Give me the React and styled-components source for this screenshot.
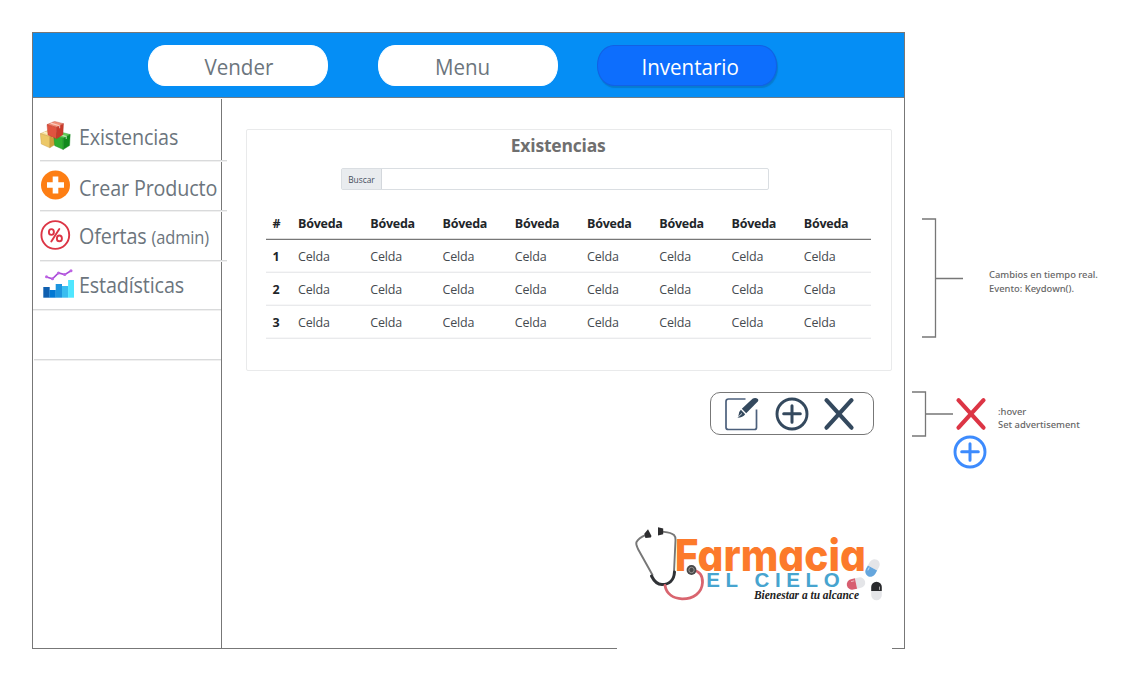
import React from "react";
import styled, { createGlobalStyle } from "styled-components";

const Global = createGlobalStyle`
  * { box-sizing: border-box; }
  body { margin: 0; background: #fff; font-family: "Open Sans", "Noto Sans", sans-serif; }
`;

const Page = styled.div`
  display: flex;
  width: 1142px;
  height: 698px;
  padding: 32px 0 0 32px;
  overflow: hidden;
`;

const Frame = styled.main`
  display: flex;
  flex-direction: column;
  width: 873px;
  height: 617px;
  border: 1px solid #777;
  border-bottom: 0;
`;

const TopBar = styled.nav`
  display: flex;
  flex: none;
  height: 65px;
  padding: 12px 0 0 115px;
  background: #058ef5;
  border-bottom: 1px solid #6f7d88;
`;

const NavButton = styled.button`
  width: 180px;
  height: 41px;
  margin: 0 ${(p) => p.$gap}px 0 0;
  padding: 1px ${(p) => Math.max(0, -p.$shift)}px 0 ${(p) => Math.max(0, p.$shift)}px;
  border: 1px solid ${(p) => (p.$active ? "#1261e4" : "#fff")};
  border-radius: 17px / 20px;
  background: ${(p) => (p.$active ? "#0d6efd" : "#fff")};
  color: ${(p) => (p.$active ? "#fff" : "#6c757d")};
  box-shadow: ${(p) => (p.$active ? "1px 2px 1px #077bd0" : "none")};
  font: 400 22px/30px "Open Sans", sans-serif;
`;

const NavText = styled.span`
  display: inline-block;
  transform: scaleX(0.935);
`;

const Body = styled.div`
  display: flex;
  flex: 1;
  min-height: 0;
`;

const Sidebar = styled.aside`
  width: 189px;
  margin-top: 1px;
  border-right: 1px solid #777;
`;

const SideItem = styled.div`
  display: flex;
  align-items: flex-start;
  width: ${(p) => p.$width}px;
  height: ${(p) => p.$height}px;
  margin-left: ${(p) => p.$left}px;
  border-bottom: 1px solid #d9dadb;
  box-shadow: 0 1px 0 #f0f0f0;
`;

const IconSlot = styled.span`
  flex: none;
  width: 32px;
  height: 32px;
  margin: ${(p) => p.$top}px 0 0 ${(p) => p.$left}px;
  svg { display: block; }
`;

const SideLabel = styled.span`
  margin: ${(p) => p.$top}px 0 0 ${(p) => p.$left}px;
  color: #6c757d;
  font-size: 21px;
  line-height: 28px;
  letter-spacing: -0.15px;
  white-space: nowrap;
  transform: scaleX(0.94);
  transform-origin: left;
  small { font-size: 17.5px; }
`;

const Content = styled.section`
  display: flex;
  flex-direction: column;
  flex: 1;
  padding: 31px 13px 0 24px;
`;

const Card = styled.div`
  width: 646px;
  height: 242px;
  padding: 4px 20px 0 19px;
  border: 1px solid #e9eaeb;
  border-radius: 2px;
`;

const Title = styled.h1`
  margin: 0;
  padding-right: 20px;
  color: #6f6f6f;
  font-size: 18.5px;
  font-weight: 700;
  line-height: 22px;
  text-align: center;
  letter-spacing: -0.2px;
  span { display: inline-block; transform: scaleX(0.945); }
`;

const SearchGroup = styled.label`
  display: flex;
  width: 428px;
  height: 22px;
  margin: 12px 0 0 75px;
  border: 1px solid #dadee2;
  border-radius: 2px;
`;

const SearchTag = styled.span`
  width: 40px;
  background: #e9ecef;
  border-right: 1px solid #d3d7dc;
  color: #454c5c;
  font-size: 8.4px;
  line-height: 21px;
  text-align: center;
`;

const SearchInput = styled.input`
  flex: 1;
  min-width: 0;
  border: 0;
  background: transparent;
  outline: none;
`;

const Table = styled.div`
  margin-top: 17px;
  width: 605px;
`;

const Row = styled.div`
  display: grid;
  grid-template-columns: 24px repeat(7, 72.25px) 1fr;
  height: 33px;
  border-bottom: ${(p) => (p.$head ? "1px solid #777" : "1px solid #e9eaec")};
  box-shadow: 0 ${(p) => (p.$head ? "-1px 0 #ddd inset" : "-1px 0 #f7f7f8 inset")};
`;

const Cell = styled.span`
  padding-left: ${(p) => (p.$index ? 6.5 : 8)}px;
  color: ${(p) => (p.$bold ? "#212529" : "#454a4f")};
  font-size: 12.5px;
  font-weight: ${(p) => (p.$bold ? 700 : 400)};
  line-height: 34px;
  letter-spacing: ${(p) => (p.$bold ? -0.25 : -0.2)}px;
`;

const Actions = styled.div`
  display: flex;
  align-self: flex-end;
  align-items: center;
  width: 164px;
  height: 43px;
  margin: 21px 18px 0 0;
  padding-left: 13px;
  border: 1px solid #777;
  border-radius: 10px;
  svg { flex: none; }
`;

const ActionButton = styled.span`
  display: flex;
  margin-right: ${(p) => p.$gap}px;
`;

const Brand = styled.div`
  margin: 87px 0 0 386px;
  svg { display: block; }
`;

const BottomEdge = styled.div`
  display: flex;
  justify-content: space-between;
  flex: none;
  &::before, &::after { content: ""; height: 1px; background: #777; }
  &::before { width: 584px; }
  &::after { width: 12px; }
`;

const Notes = styled.aside`
  display: flex;
  flex-direction: column;
  padding-top: 186px;
`;

const Note = styled.div`
  display: flex;
  align-items: flex-start;
  margin: ${(p) => p.$top}px 0 0 ${(p) => p.$left}px;
  svg { display: block; flex: none; }
`;

const NoteIcons = styled.div`
  display: flex;
  flex-direction: column;
  align-items: flex-end;
  gap: 4px;
  padding-top: 6px;
`;

const NoteText = styled.p`
  margin: ${(p) => p.$top}px 0 0 ${(p) => p.$left}px;
  color: #666;
  font: 500 9.4px/${(p) => p.$line}px "Noto Sans", "Open Sans", sans-serif;
  white-space: nowrap;
`;

const Cube = ({ x, y, top, left, right, line }) => (
  <g transform={`translate(${x} ${y})`} stroke={line} strokeWidth=".4" strokeLinejoin="round">
    <path d="M0 3.200 7.500 0l9 2.300L9.500 6Z" fill={top} />
    <path d="M0 3.200 9.500 6v11.300L1 13.500Z" fill={left} />
    <path d="m9.500 6 7-3.700-.6 11-6.400 4Z" fill={right} />
    <path d="m3.600 1.700 9 2.700v2.500" fill="none" stroke="#fff" strokeOpacity=".55" strokeWidth="1.200" />
  </g>
);

const BoxesIcon = () => (
  <svg width="32" height="30" viewBox="0 0 32 30">
    <Cube x={0.3} y={9.5} top="#f7e3a0" left="#ecc868" right="#cf9f3a" line="#c49a45" />
    <Cube x={13.7} y={11.2} top="#66ce58" left="#2fae30" right="#118a1c" line="#1c8a26" />
    <Cube x={7} y={0.4} top="#f28f76" left="#e0533f" right="#c8392a" line="#b8382c" />
  </svg>
);

const AddBadgeIcon = () => (
  <svg width="31" height="30" viewBox="0 0 31 30">
    <circle cx="15.500" cy="15" r="14.500" fill="#fd7e14" />
    <path d="M15.500 6.500v17M7 15h17" stroke="#fff" strokeWidth="5.600" />
  </svg>
);

const PercentIcon = () => (
  <svg width="31" height="30" viewBox="0 0 31 30" fill="none" stroke="#dc3545">
    <circle cx="15.300" cy="15" r="13.900" strokeWidth="1.900" />
    <ellipse cx="11.400" cy="12" rx="2.500" ry="2.900" strokeWidth="1.900" />
    <ellipse cx="19.400" cy="18.400" rx="2.500" ry="2.900" strokeWidth="1.900" />
    <path d="m19.300 9-8 12.500" strokeWidth="1.900" strokeLinecap="round" />
  </svg>
);

const StatsIcon = () => (
  <svg width="32" height="30" viewBox="0 0 32 30">
    <path fill="#0f5faf" d="M.3 18h6.400v10.700H.3z" />
    <path fill="#0078d4" d="M6.500 21h6.300v7.700H6.500z" />
    <path fill="#1c94de" d="M12.700 15H19v13.700h-6.300z" />
    <path fill="#38bdf0" d="M19 17h6.200v11.700H19z" />
    <path fill="#50e6ff" d="M25.100 11H31v17.700h-5.900z" />
    <path d="M3.500 8 9.500 9.800 15.500 4 21.700 5.600 28 1.700" fill="none" stroke="#a94bd8" strokeWidth="1.600" />
    <g fill="#bd63e3">
      <circle cx="3.500" cy="7.800" r="1.500" /><circle cx="9.500" cy="9.800" r="1.500" /><circle cx="15.500" cy="4" r="1.500" />
      <circle cx="21.700" cy="5.600" r="1.500" /><circle cx="28" cy="1.700" r="1.500" />
    </g>
  </svg>
);

const EditIcon = () => (
  <svg width="35" height="34" viewBox="0 0 35 34">
    <path d="M21.500 2H4.500Q2 2 2 4.500v26Q2 32.500 4.500 32.500h26q2 0 2-2V12.500" fill="none" stroke="#4c607c" strokeWidth="1.700" />
    <path d="M32.500 1.200q2.800.8 1.300 3.300L22.200 16.200l-4.400-4.400L28.500 1.800Q30 .8 32.500 1.200Z" fill="#34495e" />
    <path d="m16.900 12.800 4.300 4.400q-2.300 3.300-7.700 3.600 1.200-1 .9-1.800 0-4.300 2.500-6.200Z" fill="#34495e" />
    <path d="m14.200 20 3.800-3.600" stroke="#fff" strokeWidth=".8" />
  </svg>
);

const PlusIcon = ({ color }) => (
  <svg width="34" height="34" viewBox="0 0 34 34" fill="none" stroke={color} strokeLinecap="round">
    <circle cx="17" cy="17" r="15" strokeWidth="2.900" />
    <path d="M17 8.700v16.600M8.700 16.700h16.600" strokeWidth="3" />
  </svg>
);

const CrossIcon = ({ color }) => (
  <svg width="32" height="34" viewBox="0 0 32 34" fill="none" stroke={color} strokeLinecap="round">
    <path d="m3.500 3.200 25 27.500M28.500 3.200l-25 27.500" strokeWidth="4.200" />
  </svg>
);

const Bracket = ({ height, mid }) => (
  <svg width="41" height={height} viewBox={`0 0 41 ${height}`} fill="none" stroke="#777" strokeWidth="1.300">
    <path d={`M0 1h13.500V${height - 1}H0M13.500 ${mid}H41`} />
  </svg>
);

const Pill = ({ x, y, angle, color }) => (
  <g transform={`translate(${x} ${y}) rotate(${angle})`}>
    <path d="M-5.300 0v-4a5.300 5.300 0 0 1 10.600 0v4Z" fill="#e4e5e8" />
    <path d="M-5.300 0v4a5.300 5.300 0 0 0 10.600 0V0Z" fill={color} />
    <path d="M-3 1.500v2.500" stroke="#fff" strokeOpacity=".6" strokeWidth="1" strokeLinecap="round" />
  </g>
);

const BrandLogo = () => (
  <svg width="250" height="80" viewBox="632 522 250 80" overflow="visible">
    <text x="674.800" y="570.500" textLength="191" lengthAdjust="spacingAndGlyphs" fill="#fc7a2b"
      style={{ font: '800 44.500px Inter, sans-serif', fontFeatureSettings: '"cv11" 1' }}>Farmacia</text>
    <g fill="none" strokeLinecap="round">
      <path d="M647 534.500c-4 1.800-8 3-10.500 7.500-1 2 .5 4.500 1.500 7l14.500 26" stroke="#777" strokeWidth="1.900" />
      <path d="M661 531.500c5 .7 9.500.5 13 3.500 1.500 1.500 1.600 3 1.500 5l-1.500 32" stroke="#777" strokeWidth="1.900" />
      <path d="M651.500 576c2.500 5 5.500 8.500 10.500 8.500 7 0 12-4 12.500-12.500" stroke="#303236" strokeWidth="3" />
      <path d="M665 585.500c1.500 9 9 13 17 13.300 11.500.2 20-6 20.500-16.300.3-8-4.500-11.500-9.500-12.500" stroke="#d9656f" strokeWidth="2.800" />
    </g>
    <path d="m644.300 533.800 3.700-4.600 3.500 6.700-.7 1.700-5.400.5ZM658 527.300l5.200 1.200v5.800l-5.200 1.200Z" fill="#2d2d2f" />
    <circle cx="691.500" cy="570" r="4.900" fill="#48494a" />
    <circle cx="691.500" cy="570" r="2.700" fill="none" stroke="#a8a6a3" strokeWidth=".8" />
    <text x="706.300" y="587" letterSpacing="5.600" fill="#47a4cf"
      style={{ font: '700 20.500px "Liberation Sans", sans-serif' }}>EL CIELO</text>
    <text x="754" y="599" textLength="105" lengthAdjust="spacingAndGlyphs" fill="#222"
      style={{ font: 'italic 700 11.500px "Liberation Serif", serif' }}>Bienestar a tu alcance</text>
    <Pill x={872.500} y={568} angle={29} color="#65a6dd" />
    <Pill x={856} y={583.500} angle={78} color="#d75e70" />
    <g transform="rotate(180 876.500 591)">
      <Pill x={876.500} y={591} angle={0} color="#292a2d" />
    </g>
  </svg>
);

const columns = Array.from({ length: 8 }, (_, i) => i);

export default function App() {
  return (
    <>
      <Global />
      <Page>
        <Frame>
          <TopBar>
            <NavButton $gap={50} $shift={1}><NavText>Vender</NavText></NavButton>
            <NavButton $gap={39} $shift={-11}><NavText>Menu</NavText></NavButton>
            <NavButton $gap={0} $shift={7} $active><NavText>Inventario</NavText></NavButton>
          </TopBar>
          <Body>
            <Sidebar>
              <SideItem $left={7} $width={187} $height={62}>
                <IconSlot $top={22} $left={0}><BoxesIcon /></IconSlot>
                <SideLabel $top={24} $left={7}>Existencias</SideLabel>
              </SideItem>
              <SideItem $left={7} $width={187} $height={50}>
                <IconSlot $top={9} $left={0}><AddBadgeIcon /></IconSlot>
                <SideLabel $top={13} $left={7}>Crear Producto</SideLabel>
              </SideItem>
              <SideItem $left={7} $width={187} $height={50}>
                <IconSlot $top={9} $left={0}><PercentIcon /></IconSlot>
                <SideLabel $top={11} $left={7}>Ofertas <small>(admin)</small></SideLabel>
              </SideItem>
              <SideItem $left={0} $width={188} $height={49}>
                <IconSlot $top={8} $left={10}><StatsIcon /></IconSlot>
                <SideLabel $top={10} $left={4}>Estadísticas</SideLabel>
              </SideItem>
              <SideItem $left={1} $width={187} $height={50} />
            </Sidebar>
            <Content>
              <Card>
                <Title><span>Existencias</span></Title>
                <SearchGroup>
                  <SearchTag>Buscar</SearchTag>
                  <SearchInput aria-label="Buscar" />
                </SearchGroup>
                <Table>
                  <Row $head>
                    <Cell $index $bold>#</Cell>
                    {columns.map((c) => <Cell key={c} $bold>Bóveda</Cell>)}
                  </Row>
                  {[1, 2, 3].map((n) => (
                    <Row key={n}>
                      <Cell $index $bold>{n}</Cell>
                      {columns.map((c) => <Cell key={c}>Celda</Cell>)}
                    </Row>
                  ))}
                </Table>
              </Card>
              <Actions>
                <ActionButton $gap={16}><EditIcon /></ActionButton>
                <ActionButton $gap={14}><PlusIcon color="#34495e" /></ActionButton>
                <ActionButton $gap={0}><CrossIcon color="#34495e" /></ActionButton>
              </Actions>
              <Brand><BrandLogo /></Brand>
            </Content>
          </Body>
          <BottomEdge />
        </Frame>
        <Notes>
          <Note $top={0} $left={17}>
            <Bracket height={120} mid={60.5} />
            <NoteText $top={50} $left={26} $line={14}>Cambios en tiempo real.<br />Evento: Keydown().</NoteText>
          </Note>
          <Note $top={53} $left={7}>
            <Bracket height={46} mid={23} />
            <NoteIcons>
              <CrossIcon color="#dc3545" />
              <PlusIcon color="#3d8bfd" />
            </NoteIcons>
            <NoteText $top={14} $left={11} $line={13}>:hover<br />Set advertisement</NoteText>
          </Note>
        </Notes>
      </Page>
    </>
  );
}
